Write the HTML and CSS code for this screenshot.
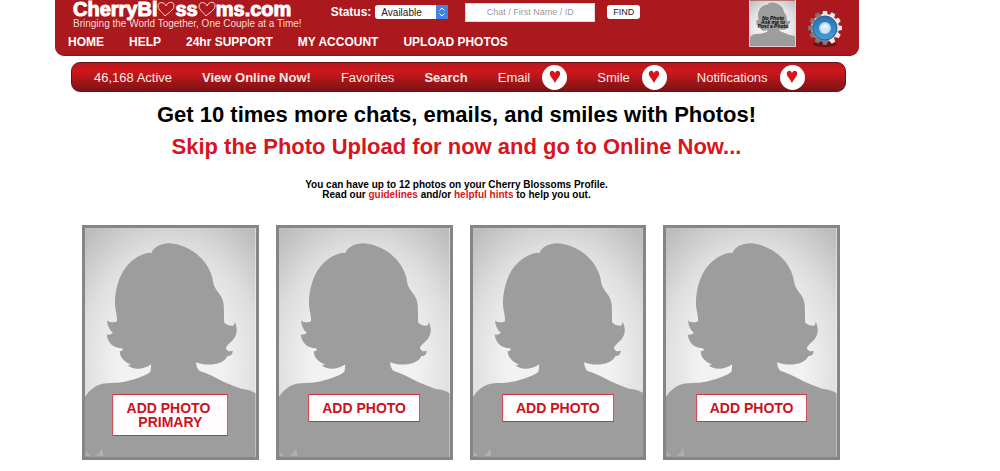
FILE: index.html
```html
<!DOCTYPE html>
<html lang="en">
<head>
    <meta charset="UTF-8">
    <meta name="viewport" content="width=device-width, initial-scale=1.0">
    <title>Cherry Blossoms - Upload Photos</title>
    <link rel="stylesheet" href="styles.css">
</head>
<body>
    <!-- shared shapes -->
    <svg class="shapes" aria-hidden="true">
        <defs>
            <radialGradient id="backdrop" cx="0.5" cy="0.6" r="0.75">
                <stop offset="0.4" stop-color="#f2f2f2"/>
                <stop offset="0.7" stop-color="#dedede"/>
                <stop offset="1" stop-color="#bcbcbc"/>
            </radialGradient>
            <linearGradient id="metal" x1="0" y1="0" x2="0" y2="1">
                <stop offset="0" stop-color="#fbf1f0"/>
                <stop offset="0.5" stop-color="#c9c4c6"/>
                <stop offset="1" stop-color="#77696b"/>
            </linearGradient>
            <linearGradient id="blue" x1="0" y1="0" x2="0" y2="1">
                <stop offset="0" stop-color="#2a6fae"/>
                <stop offset="1" stop-color="#3f9fdf"/>
            </linearGradient>
            <radialGradient id="knob">
                <stop offset="0.2" stop-color="#ffffff"/>
                <stop offset="1" stop-color="#a9cdea"/>
            </radialGradient>
        </defs>
        <symbol id="woman" viewBox="31 31 513 688">
            <rect x="31" y="31" width="513" height="688" fill="url(#backdrop)"/>
            <path fill="#9d9d9d" d="M31 538C45 518 62 502 88 498C118 496 142 498 170 488C195 480 215 474 228 462L230 440C214 452 190 457 172 451Q165 449 160 443L170 441C150 434 136 420 135 401L144 400L143 392C120 393 99 378 96 350Q104 355 115 346Q100 335 97 309Q110 319 127 311C129 294 120 276 121 254C123 190 150 124 218 106Q225 104 230 107C238 86 262 76 286 77C344 81 400 124 414 182C418 226 447 226 448 266L449 315Q463 328 476 324Q482 320 480 311Q491 330 485 350C480 370 460 376 454 392Q460 405 475 400Q475 416 458 416C450 440 398 449 365 434Q365 452 376 461C405 468 445 497 500 514Q530 517 544 528V719H31Z"/>
            <path fill="#b0b0b0" d="M33 702L47 716H33ZM62 716Q76 708 82 692L86 716Z"/>
        </symbol>
        <symbol id="heart" viewBox="0 0 20 24">
            <path d="M10 23C9 17 1 12 1 6C1 0 9 -1 10 6C11 -1 19 0 19 6C19 12 11 17 10 23Z"/>
        </symbol>
        <symbol id="logo-heart" viewBox="0 0 18 16">
            <path d="M8 15C6 12 1 9 1 5C1 0 8 1 9 5C11 0 17 0 17 5C17 9 11 12 8 15Z"/>
        </symbol>
    </svg>

    <div class="page">
        <header class="header">
            <div class="header-main">
                <div class="top">
                    <a class="brand" href="#">
                        <span class="logo">CherryBl<svg><use href="#logo-heart"/></svg>ss<svg><use href="#logo-heart"/></svg>ms.com</span>
                        <span class="tagline">Bringing the World Together, One Couple at a Time!</span>
                    </a>
                    <form class="tools">
                        <label for="status">Status:</label>
                        <span class="status">
                            <select id="status">
                                <option>Available</option>
                                <option>Busy</option>
                            </select>
                            <svg viewBox="0 0 12 14"><path d="M3.500 5.500L6 3L8.500 5.500M3.500 8.500L6 11L8.500 8.500"/></svg>
                        </span>
                        <input type="text" aria-label="Chat / First Name / ID" placeholder="Chat / First Name / ID">
                        <button type="submit">FIND</button>
                    </form>
                </div>
                <nav class="menu">
                    <a href="#">HOME</a>
                    <a href="#">HELP</a>
                    <a href="#">24hr SUPPORT</a>
                    <a href="#">MY ACCOUNT</a>
                    <a href="#">UPLOAD PHOTOS</a>
                </nav>
            </div>
            <a class="avatar" href="#" aria-label="My profile">
                <svg viewBox="0 0 45 45">
                    <svg width="45" height="45" viewBox="31 50 513 600" preserveAspectRatio="none"><use href="#woman" x="31" y="31" width="513" height="688"/></svg>
                    <g class="avatar-text">
                        <text x="23" y="19">No Photo</text>
                        <text x="23" y="23">Ask me to</text>
                        <text x="23" y="27">Post a Photo</text>
                    </g>
                </svg>
            </a>
            <a class="gear" href="#" aria-label="Settings">
                <svg viewBox="0 0 36 36">
                    <ellipse cx="18" cy="33" rx="12" ry="3" fill="#6d1013"/>
                    <g fill="url(#metal)">
                        <circle cx="18" cy="17" r="14"/>
                        <path id="teeth" d="M15 5L16 0H20L21 5ZM15 29L16 34H20L21 29Z"/>
                        <use href="#teeth" transform="rotate(30 18 17)"/>
                        <use href="#teeth" transform="rotate(60 18 17)"/>
                        <use href="#teeth" transform="rotate(90 18 17)"/>
                        <use href="#teeth" transform="rotate(120 18 17)"/>
                        <use href="#teeth" transform="rotate(150 18 17)"/>
                    </g>
                    <circle cx="18" cy="17" r="12" fill="url(#blue)" stroke="#2b5f90"/>
                    <circle cx="18" cy="17" r="6" fill="url(#knob)"/>
                    <circle cx="18" cy="19" r="3" fill="#d5e7f5"/>
                </svg>
            </a>
        </header>

        <nav class="bar">
            <a href="#">46,168 Active</a>
            <a href="#"><b>View Online Now!</b></a>
            <a href="#">Favorites</a>
            <a href="#"><b>Search</b></a>
            <a href="#">Email <span class="badge"><svg><use href="#heart"/></svg></span></a>
            <a href="#">Smile <span class="badge"><svg><use href="#heart"/></svg></span></a>
            <a href="#">Notifications <span class="badge"><svg><use href="#heart"/></svg></span></a>
        </nav>

        <main>
            <div class="intro">
                <h1>Get 10 times more chats, emails, and smiles with Photos!</h1>
                <h2><a href="#">Skip the Photo Upload for now and go to Online Now...</a></h2>
                <p>
                    You can have up to 12 photos on your Cherry Blossoms Profile.<br>
                    Read our <a href="#">guidelines</a> and/or <a href="#">helpful hints</a> to help you out.
                </p>
            </div>
            <div class="photos">
                <div class="photo">
                    <svg viewBox="0 0 513 688"><use href="#woman"/></svg>
                    <button>ADD PHOTO&nbsp;<br>PRIMARY</button>
                </div>
                <div class="photo">
                    <svg viewBox="0 0 513 688"><use href="#woman"/></svg>
                    <button>ADD PHOTO</button>
                </div>
                <div class="photo">
                    <svg viewBox="0 0 513 688"><use href="#woman"/></svg>
                    <button>ADD PHOTO</button>
                </div>
                <div class="photo">
                    <svg viewBox="0 0 513 688"><use href="#woman"/></svg>
                    <button>ADD PHOTO</button>
                </div>
            </div>
        </main>
    </div>
</body>
</html>
```
FILE: styles.css
```css
* {
    box-sizing: border-box;
}
body {
    margin: 0;
    background-color: #fff;
    font-family: "Liberation Sans", Arial, sans-serif;
}
a {
    color: inherit;
    text-decoration: none;
}
button, input, select {
    font-family: inherit;
    margin: 0;
}
.shapes {
    position: absolute;
    width: 0;
    height: 0;
}
.page {
    max-width: 804px;
    margin-left: 55px;
}
.header {
    display: flex;
    height: 56px;
    padding: 0 16px 0 13px;
    border-radius: 0 0 9px 9px;
    border-bottom: 1px solid #8d1418;
    background-color: #ab181d;
    color: #fff;
}
.header-main {
    flex: 1;
}
.top {
    display: flex;
    gap: 29px;
    height: 35px;
    padding-left: 5px;
}
.brand {
    display: flex;
    flex-direction: column;
}
.logo {
    display: flex;
    align-items: center;
    height: 18px;
    font-size: 20px;
    font-weight: bold;
    line-height: 18px;
    -webkit-text-stroke: 1px #fff;
}
.logo svg {
    width: 18px;
    height: 16px;
    fill: none;
    stroke: #fbdcd6;
    stroke-width: 1px;
}
.tagline {
    font-size: 10px;
    line-height: 12px;
    color: #f8dcd8;
}
.tools {
    display: flex;
    align-items: center;
    height: 24px;
}
.tools label {
    margin-right: 4px;
    font-size: 12px;
    font-weight: bold;
}
.status {
    position: relative;
    margin-right: 17px;
}
.status select {
    display: block;
    appearance: none;
    width: 73px;
    height: 14px;
    padding: 0 6px;
    border: none;
    border-radius: 3px;
    background-color: #fff;
    color: #222;
    font-size: 10px;
}
.status svg {
    position: absolute;
    top: 0;
    right: 0;
    width: 12px;
    height: 14px;
    border-radius: 0 3px 3px 0;
    background-color: #3f83e8;
    fill: none;
    stroke: #fff;
    pointer-events: none;
}
.tools input {
    width: 130px;
    height: 19px;
    margin-right: 12px;
    padding: 0;
    border: 1px solid #ddd;
    font-size: 9px;
    text-align: center;
}
.tools input::placeholder {
    color: #9a9a9a;
}
.tools button {
    width: 33px;
    height: 14px;
    padding: 0;
    border: none;
    border-radius: 3px;
    background-color: #fff;
    color: #222;
    font-size: 9px;
}
.menu {
    display: flex;
    gap: 25px;
    font-size: 12px;
    font-weight: bold;
    line-height: 14px;
}
.avatar {
    width: 47px;
    height: 47px;
    margin-right: 11px;
    border: 1px solid #e8d0d0;
    border-top: none;
}
.avatar svg {
    display: block;
    width: 100%;
    height: 100%;
}
.avatar-text {
    font-size: 5px;
    font-weight: bold;
    font-style: italic;
    text-anchor: middle;
}
.gear svg {
    display: block;
    width: 36px;
    height: 36px;
    margin-top: 11px;
}
.bar {
    display: flex;
    align-items: center;
    gap: 30px;
    height: 30px;
    margin: 6px 13px 0 16px;
    padding: 0 22px;
    border: 1px solid #641215;
    border-radius: 9px;
    background: linear-gradient(#b8181c, #cf171c 30%, #7b1316);
    color: #fbe9e6;
    font-size: 13px;
}
.bar a {
    display: flex;
    align-items: center;
    gap: 12px;
    white-space: nowrap;
}
.badge {
    display: grid;
    place-items: center;
    width: 25px;
    height: 25px;
    border-radius: 50%;
    background-color: #fff;
}
.badge svg {
    width: 12px;
    height: 14px;
    fill: #d8141b;
}
main {
    padding: 7px 19px 0 27px;
    text-align: center;
}
.intro {
    margin-right: 9px;
}
h1, h2 {
    margin: 0;
    font-size: 22px;
    line-height: 32px;
}
h2, p a {
    color: #d8141f;
}
p {
    margin: 17px 0 25px;
    font-size: 10px;
    font-weight: bold;
    line-height: 10px;
}
.photos {
    display: grid;
    grid-template-columns: repeat(4, 1fr);
    gap: 17px;
}
.photo {
    position: relative;
    border: 3px solid #868686;
}
.photo svg {
    display: block;
    width: 100%;
}
.photo button {
    position: absolute;
    top: 166px;
    left: 50%;
    transform: translateX(-50%);
    padding: 6px 13px;
    border: 1px solid #d0343c;
    background-color: #fffdfd;
    color: #c8141d;
    font-size: 14px;
    font-weight: bold;
    line-height: 14px;
    white-space: nowrap;
}
```
